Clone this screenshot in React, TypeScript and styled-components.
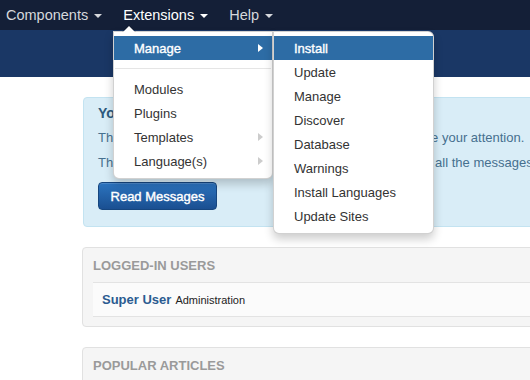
import React from 'react';
import styled, { createGlobalStyle } from 'styled-components';

const GlobalStyle = createGlobalStyle`
  body {
    margin: 0;
    font-family: "Liberation Sans", Arial, sans-serif;
    background: #ffffff;
    overflow: hidden;
  }
`

const Page = styled.div`
  position: relative;
  width: 530px;
  height: 380px;
  overflow: hidden;
  background: #ffffff;
`

const Navbar = styled.nav`
  height: 30px;
  background: #141f37;
  display: flex;
  align-items: center;
`

const NavList = styled.ul`
  display: flex;
  margin: 0;
  padding: 0 0 0 6px;
  list-style: none;
`

const NavItem = styled.li<{ $active?: boolean }>`
  display: flex;
  align-items: center;
  padding: 0 10px 0 0;
  margin-right: 11px;
  font-size: 14.5px;
  color: ${props => (props.$active ? '#ffffff' : '#d6d8dc')};
  white-space: nowrap;
`

const Caret = styled.span`
  display: inline-block;
  margin-left: 6px;
  margin-top: 2px;
  border-left: 4px solid transparent;
  border-right: 4px solid transparent;
  border-top: 4px solid currentColor;
`

const Subhead = styled.div`
  height: 47px;
  background: #1a3765;
`

const Content = styled.main`
  display: flex;
  flex-direction: column;
  gap: 20px;
  padding: 20px 0 0 82px;
`

const Alert = styled.section`
  width: 560px;
  margin-left: 1px;
  padding: 6px 14px 16px 14px;
  background: #d9edf7;
  border: 1px solid #c3e3f1;
  border-radius: 4px;
  color: #46708f;
  font-size: 13px;
`

const AlertTitle = styled.h4`
  margin: 0;
  font-size: 14px;
  line-height: 18px;
  font-weight: bold;
  color: #2d5a7e;
`

const AlertText = styled.p`
  margin: 7px 0 0 0;
  line-height: 18px;
  white-space: nowrap;
`

const PrimaryButton = styled.button`
  margin-top: 10px;
  height: 28px;
  width: 119px;
  padding: 0;
  border: 1px solid #16467f;
  border-radius: 4px;
  background: linear-gradient(to bottom, #2c74bf, #1a4f91);
  color: #ffffff;
  font-family: "Liberation Sans", Arial, sans-serif;
  font-size: 13px;
  -webkit-text-stroke: 0.4px #ffffff;
  box-shadow: inset 0 1px 0 rgba(255, 255, 255, 0.15);
`

const Panel = styled.section`
  width: 560px;
  padding: 9px 10px 9px 10px;
  background: #f5f5f5;
  border: 1px solid #e1e1e1;
  border-radius: 4px;
`

const PanelTitle = styled.h2`
  margin: 0 0 7px 0;
  font-size: 13px;
  line-height: 18px;
  font-weight: bold;
  color: #9a9a9a;
  text-transform: uppercase;
`

const PanelRow = styled.div`
  height: 33px;
  display: flex;
  align-items: center;
  gap: 4px;
  padding-left: 9px;
  background: #fbfbfb;
  border-top: 1px solid #e3e3e3;
  border-bottom: 1px solid #e3e3e3;
`

const UserName = styled.a`
  font-size: 13px;
  font-weight: bold;
  color: #2b5b91;
  text-decoration: none;
`

const UserRole = styled.span`
  font-size: 11px;
  color: #222222;
`

const Menu = styled.ul<{ $sub?: boolean }>`
  position: absolute;
  box-sizing: border-box;
  margin: 0;
  padding: 4px 0 5px 0;
  list-style: none;
  background: #ffffff;
  border: 1px solid rgba(0, 0, 0, 0.18);
  border-radius: ${props => (props.$sub ? '0 6px 6px 6px' : '0 0 6px 6px')};
  box-shadow: 0 5px 10px rgba(0, 0, 0, 0.2);
  font-size: 13px;
  z-index: 10;
`

const MainMenu = styled(Menu)`
  left: 113px;
  top: 31px;
  width: 160px;

  &::before {
    content: '';
    position: absolute;
    left: 8px;
    top: -7px;
    border-left: 7px solid transparent;
    border-right: 7px solid transparent;
    border-bottom: 7px solid rgba(0, 0, 0, 0.18);
  }
  &::after {
    content: '';
    position: absolute;
    left: 9px;
    top: -6px;
    border-left: 6px solid transparent;
    border-right: 6px solid transparent;
    border-bottom: 6px solid #ffffff;
  }
`

const SubMenu = styled(Menu)`
  left: calc(100% + 1px);
  top: -5px;
  width: 161px;
`

const MenuItem = styled.li<{ $active?: boolean }>`
  position: relative;
  display: flex;
  align-items: center;
  justify-content: space-between;
  height: 24px;
  padding: 0 9px 0 20px;
  white-space: nowrap;
  color: ${props => (props.$active ? '#ffffff' : '#333333')};
  background: ${props => (props.$active ? '#2d6ca5' : 'transparent')};
  -webkit-text-stroke: ${props => (props.$active ? '0.35px #ffffff' : '0')};
`

const Arrow = styled.span<{ $light?: boolean }>`
  display: inline-block;
  border-top: 4px solid transparent;
  border-bottom: 4px solid transparent;
  border-left: 5px solid ${props => (props.$light ? '#ffffff' : '#cccccc')};
`

const Divider = styled.li`
  height: 1px;
  margin: 8px 1px;
  background: #e5e5e5;
`

const subItems = ['Install', 'Update', 'Manage', 'Discover', 'Database', 'Warnings', 'Install Languages', 'Update Sites']

const App = () => {
  return (
    <Page>
      <GlobalStyle />
      <Navbar>
        <NavList>
          <NavItem>Components<Caret /></NavItem>
          <NavItem $active>Extensions<Caret /></NavItem>
          <NavItem>Help<Caret /></NavItem>
        </NavList>
      </Navbar>
      <Subhead />

      <Content>
        <Alert>
          <AlertTitle>You have post-installation messages</AlertTitle>
          <AlertText>There are important post-installation messages that require your attention.</AlertText>
          <AlertText>This information area won't appear when you have hidden all the messages.</AlertText>
          <PrimaryButton>Read Messages</PrimaryButton>
        </Alert>

        <Panel>
          <PanelTitle>Logged-in Users</PanelTitle>
          <PanelRow>
            <UserName href="#">Super User</UserName>
            <UserRole>Administration</UserRole>
          </PanelRow>
        </Panel>

        <Panel>
          <PanelTitle>Popular Articles</PanelTitle>
          <PanelRow />
        </Panel>
      </Content>

      <MainMenu>
        <MenuItem $active>
          Manage
          <Arrow $light />
          <SubMenu $sub>
            {subItems.map((item, i) => (
              <MenuItem key={item} $active={i === 0}>{item}</MenuItem>
            ))}
          </SubMenu>
        </MenuItem>
        <Divider />
        <MenuItem>Modules</MenuItem>
        <MenuItem>Plugins</MenuItem>
        <MenuItem>Templates<Arrow /></MenuItem>
        <MenuItem>Language(s)<Arrow /></MenuItem>
      </MainMenu>
    </Page>
  );
};

export default App;
